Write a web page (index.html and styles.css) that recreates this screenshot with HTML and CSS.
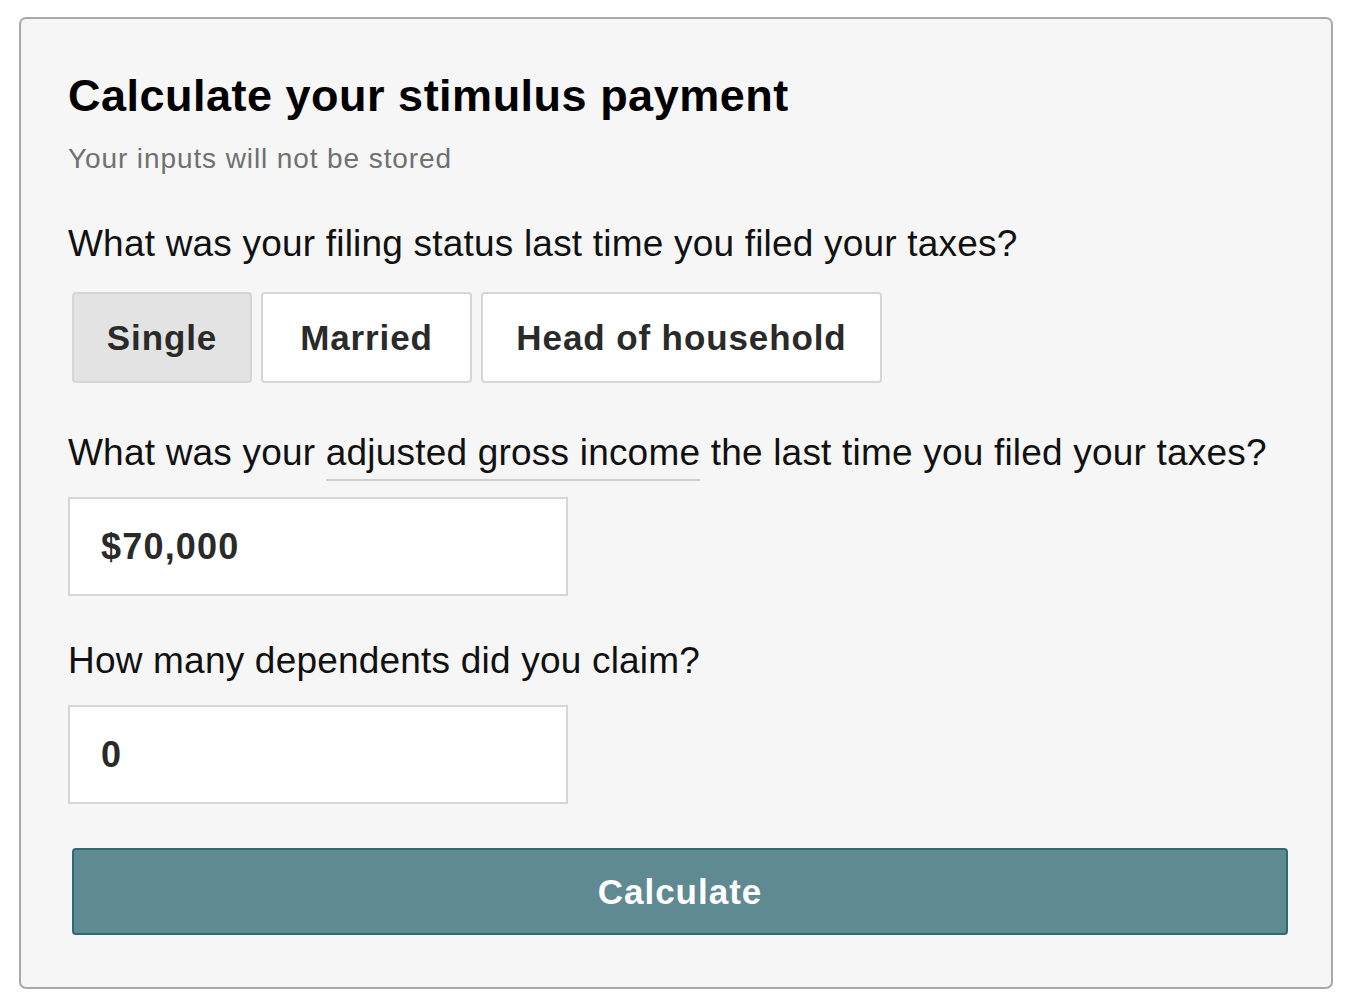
FILE: index.html
```html
<!DOCTYPE html>
<html lang="en">
<head>
<meta charset="utf-8">
<title>Stimulus calculator</title>
<link rel="stylesheet" href="styles.css">
</head>
<body>
<div class="card">
  <h1 class="title">Calculate your stimulus payment</h1>
  <p class="subtitle">Your inputs will not be stored</p>

  <p class="question q1">What was your filing status last time you filed your taxes?</p>
  <div class="options">
    <button class="opt opt-single active">Single</button>
    <button class="opt opt-married">Married</button>
    <button class="opt opt-hoh">Head of household</button>
  </div>

  <p class="question q2">What was your <span class="term">adjusted gross income</span> the last time you filed your taxes?</p>
  <div class="field">$70,000</div>

  <p class="question q3">How many dependents did you claim?</p>
  <div class="field">0</div>

  <button class="calc">Calculate</button>
</div>
</body>
</html>
```
FILE: styles.css
```css
html, body {
  margin: 0;
  padding: 0;
  background: #ffffff;
}
body {
  padding: 17px 15px 0 19px;
  font-family: "Liberation Sans", Arial, sans-serif;
}
.card {
  box-sizing: border-box;
  width: 1314px;
  height: 972px;
  border: 2px solid #a9a9a9;
  border-radius: 7px;
  background: #f6f6f6;
  padding: 52px 42px 0 47px;
}
.title {
  margin: 0;
  font-size: 45px;
  line-height: 50px;
  font-weight: 700;
  letter-spacing: 0.5px;
  color: #000;
}
.subtitle {
  margin: 21px 0 0;
  font-size: 28px;
  line-height: 34px;
  letter-spacing: 0.9px;
  color: #707070;
}
.question {
  margin: 0;
  font-size: 37px;
  line-height: 40px;
  letter-spacing: 0.2px;
  color: #111;
}
.q1 { margin-top: 48px; }
.q2 { margin-top: 50px; }
.q3 { margin-top: 45px; }
.term {
  border-bottom: 2px solid #cfcfcf;
  padding-bottom: 6px;
}
.options {
  display: flex;
  gap: 9px;
  margin: 28px 0 0 4px;
}
.opt {
  box-sizing: border-box;
  height: 91px;
  border: 2px solid #d6d6d6;
  border-radius: 4px;
  background: #fff;
  font-family: "Liberation Sans", Arial, sans-serif;
  font-weight: 700;
  font-size: 35px;
  letter-spacing: 0.9px;
  color: #2a2a2a;
  padding: 0;
}
.opt.active { background: #e3e3e3; }
.opt-single { width: 180px; }
.opt-married { width: 211px; }
.opt-hoh { width: 401px; }
.field {
  box-sizing: border-box;
  width: 500px;
  height: 99px;
  margin-top: 24px;
  border: 2px solid #d6d6d6;
  background: #fff;
  padding: 0 31px;
  display: flex;
  align-items: center;
  font-weight: 700;
  font-size: 36px;
  letter-spacing: 1.2px;
  color: #2a2a2a;
}
.calc {
  display: block;
  box-sizing: border-box;
  width: 1216px;
  height: 87px;
  margin: 44px 0 0 4px;
  border: 2px solid #2f6a73;
  border-radius: 4px;
  background: #5f8a91;
  color: #fff;
  font-family: "Liberation Sans", Arial, sans-serif;
  font-weight: 700;
  font-size: 35px;
  letter-spacing: 1px;
  padding: 0;
}
```
